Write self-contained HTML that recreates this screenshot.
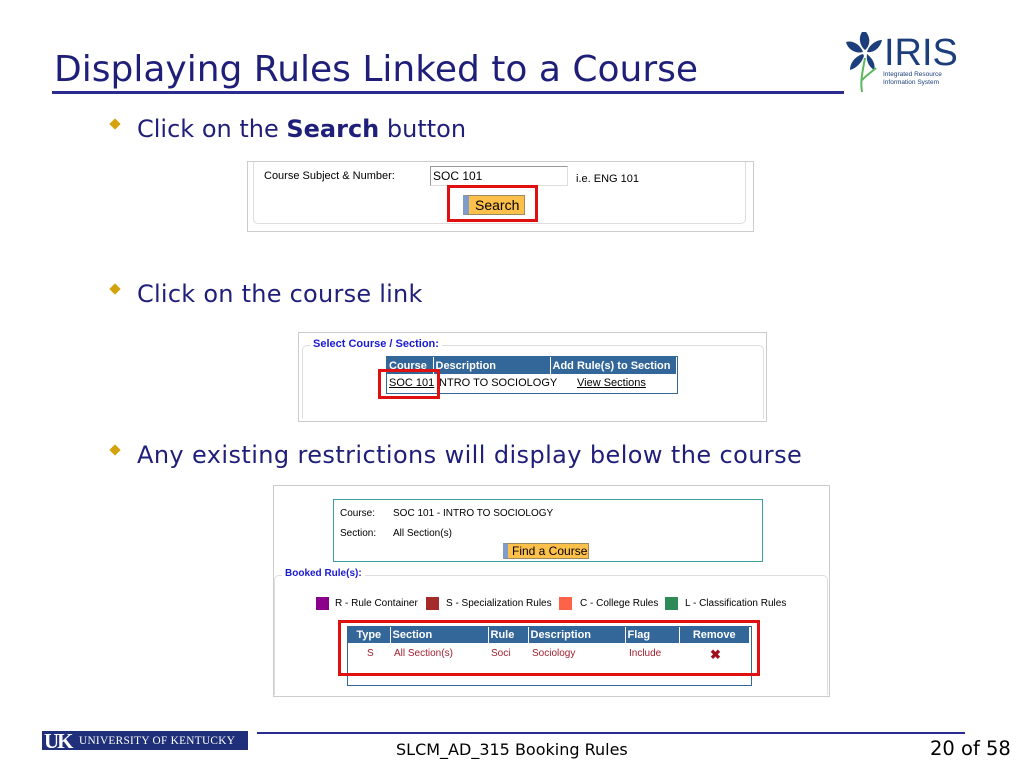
<!DOCTYPE html>
<html><head><meta charset="utf-8"><style>
*{margin:0;padding:0;box-sizing:border-box}
body{width:1024px;height:768px;background:#fff;position:relative;overflow:hidden;font-family:"DejaVu Sans","Liberation Sans",sans-serif;color:#1f1f7a}
.a{position:absolute}
.t{font-size:36px;left:54px;top:49px;white-space:nowrap}
.bul{font-size:24px;white-space:nowrap;left:137px;letter-spacing:0.25px}
.dia{position:absolute;width:8px;height:8px;background:#d4a20c;transform:rotate(45deg);left:111px}
.s{font-family:"Liberation Sans",sans-serif;color:#000;font-size:11px;white-space:nowrap}
.red{border:3px solid #e01010}
th{background:#336699;color:#fff;font-weight:bold;text-align:left;padding:0 2px;font-size:11px;border-right:1px solid #fff}
</style></head><body>
<div class="a t">Displaying Rules Linked to a Course</div>
<div class="a" style="left:52px;top:91px;width:792px;height:3px;background:#2a2a90"></div>
<!-- IRIS logo -->
<svg class="a" style="left:838px;top:28px" width="120" height="70" viewBox="0 0 120 70">
<g fill="#1c3f7c">
<path d="M24 4 C20 10 22 18 27 22 C32 18 33 10 28 4 Z"/>
<path d="M8 14 C14 12 22 16 25 24 C18 26 10 22 8 14 Z"/>
<path d="M44 12 C38 12 31 17 29 24 C36 25 42 20 44 12 Z"/>
<path d="M25 26 C18 28 12 34 12 42 C19 40 24 34 26 28 Z"/>
<path d="M29 26 C34 30 38 36 36 42 C30 38 28 32 29 26 Z"/>
</g>
<path d="M27 30 C25 42 22 52 24 64" stroke="#5cb85c" stroke-width="2" fill="none"/>
<path d="M24 52 C30 46 36 42 38 40" stroke="#5cb85c" stroke-width="2" fill="none"/>
<text x="46" y="37" font-family="Liberation Sans" font-size="38" fill="#1c3f7c">IRIS</text>
<text x="45" y="48" font-family="Liberation Sans" font-size="6.5" fill="#1c3f7c">Integrated Resource</text>
<text x="45" y="56" font-family="Liberation Sans" font-size="6.5" fill="#1c3f7c">Information System</text>
</svg>

<div class="dia" style="top:120px"></div>
<div class="a bul" style="top:115px;letter-spacing:0">Click on the <b>Search</b> button</div>

<!-- box1 -->
<div class="a" style="left:247px;top:161px;width:507px;height:71px;border:1px solid #ccc"></div>
<div class="a" style="left:253px;top:162px;width:493px;height:62px;border:1px solid #ddd;border-top:none;border-radius:0 0 5px 5px"></div>
<div class="a s" style="left:264px;top:170px">Course Subject &amp; Number:</div>
<div class="a" style="left:430px;top:166px;width:138px;height:20px;border:1px solid #999;border-right-color:#ddd;border-bottom-color:#ddd"></div>
<div class="a s" style="left:433px;top:169px;font-size:12px">SOC 101</div>
<div class="a s" style="left:576px;top:173px">i.e. ENG 101</div>
<div class="a red" style="left:447px;top:185px;width:91px;height:37px"></div>
<div class="a" style="left:463px;top:195px;width:62px;height:20px;background:#fdc04a;border:1px solid #9a8a60;border-left:6px solid #7e9ccc"></div>
<div class="a s" style="left:475px;top:197px;font-size:14px">Search</div>

<div class="dia" style="top:285px"></div>
<div class="a bul" style="top:280px">Click on the course link</div>

<!-- box2 -->
<div class="a" style="left:298px;top:332px;width:469px;height:90px;border:1px solid #ccc"></div>
<div class="a" style="left:302px;top:345px;width:462px;height:74px;border:1px solid #ddd;border-bottom:none;border-radius:5px 5px 0 0"></div>
<div class="a s" style="left:310px;top:338px;background:#fff;color:#1a1ad0;font-weight:bold;padding:0 3px">Select Course / Section:</div>
<div class="a" style="left:386px;top:356px;width:292px;height:38px;border:1px solid #336699"></div>
<table class="a" style="left:387px;top:357px;border-collapse:collapse;font-family:'Liberation Sans',sans-serif">
<tr style="height:17px"><th style="width:46px">Course</th><th style="width:117px">Description</th><th style="width:126px;border-right:none">Add Rule(s) to Section</th></tr>
</table>
<div class="a s" style="left:389px;top:377px;text-decoration:underline">SOC 101</div>
<div class="a s" style="left:436px;top:377px">INTRO TO SOCIOLOGY</div>
<div class="a s" style="left:577px;top:377px;text-decoration:underline">View Sections</div>
<div class="a red" style="left:378px;top:369px;width:62px;height:30px"></div>

<div class="dia" style="top:446px"></div>
<div class="a bul" style="top:441px;letter-spacing:0.4px">Any existing restrictions will display below the course</div>

<!-- box3 -->
<div class="a" style="left:273px;top:485px;width:557px;height:212px;border:1px solid #ccc"></div>
<div class="a" style="left:333px;top:499px;width:430px;height:63px;border:1px solid #3aa0a0"></div>
<div class="a s" style="left:340px;top:508px;font-size:10px">Course:</div>
<div class="a s" style="left:393px;top:508px;font-size:10px">SOC 101 - INTRO TO SOCIOLOGY</div>
<div class="a s" style="left:340px;top:528px;font-size:10px">Section:</div>
<div class="a s" style="left:393px;top:528px;font-size:10px">All Section(s)</div>
<div class="a" style="left:503px;top:543px;width:86px;height:16px;background:#fdc04a;border:1px solid #9a8a60;border-left:5px solid #7e9ccc"></div>
<div class="a s" style="left:512px;top:544px;font-size:12px">Find a Course</div>
<div class="a" style="left:274px;top:575px;width:554px;height:120px;border:1px solid #ddd;border-bottom:none;border-radius:5px 5px 0 0"></div>
<div class="a s" style="left:282px;top:568px;background:#fff;color:#1a1ad0;font-weight:bold;font-size:10px;padding:0 3px">Booked Rule(s):</div>
<div class="a" style="left:316px;top:597px;width:13px;height:13px;background:#8b008b"></div>
<div class="a s" style="left:335px;top:598px;font-size:10px">R - Rule Container</div>
<div class="a" style="left:426px;top:597px;width:13px;height:13px;background:#a52a2a"></div>
<div class="a s" style="left:446px;top:598px;font-size:10px">S - Specialization Rules</div>
<div class="a" style="left:559px;top:597px;width:13px;height:13px;background:#ff6347"></div>
<div class="a s" style="left:580px;top:598px;font-size:10px">C - College Rules</div>
<div class="a" style="left:665px;top:597px;width:13px;height:13px;background:#2e8b57"></div>
<div class="a s" style="left:685px;top:598px;font-size:10px">L - Classification Rules</div>
<div class="a" style="left:347px;top:626px;width:405px;height:60px;border:1px solid #336699"></div>
<table class="a" style="left:348px;top:627px;border-collapse:collapse;font-family:'Liberation Sans',sans-serif">
<tr style="height:16px"><th style="width:42px;text-align:center">Type</th><th style="width:98px">Section</th><th style="width:40px">Rule</th><th style="width:97px">Description</th><th style="width:54px">Flag</th><th style="width:70px;text-align:center;border-right:none">Remove</th></tr>
</table>
<div class="a s" style="left:367px;top:648px;color:#a02030;font-size:10px">S</div>
<div class="a s" style="left:394px;top:648px;color:#a02030;font-size:10px">All Section(s)</div>
<div class="a s" style="left:491px;top:648px;color:#a02030;font-size:10px">Soci</div>
<div class="a s" style="left:532px;top:648px;color:#a02030;font-size:10px">Sociology</div>
<div class="a s" style="left:629px;top:648px;color:#a02030;font-size:10px">Include</div>
<div class="a s" style="left:710px;top:647px;color:#a0101c;font-size:13px;font-weight:bold">✖</div>
<div class="a red" style="left:338px;top:620px;width:422px;height:56px"></div>

<!-- footer -->
<div class="a" style="left:42px;top:731px;width:206px;height:19px;background:#1f2f7a;overflow:hidden"></div>
<div class="a" style="left:44px;top:729px;font-family:'Liberation Serif',serif;font-weight:bold;color:#fff;font-size:21px;letter-spacing:-2px">UK</div>
<div class="a" style="left:79px;top:735px;font-family:'Liberation Serif',serif;color:#fff;font-size:11.3px;letter-spacing:0.3px;white-space:nowrap">UNIVERSITY OF KENTUCKY</div>
<div class="a" style="left:257px;top:732px;width:708px;height:2px;background:#2a2a90"></div>
<div class="a" style="left:396px;top:740px;font-size:16px;color:#000;white-space:nowrap">SLCM_AD_315 Booking Rules</div>
<div class="a" style="left:930px;top:737px;font-size:19.5px;color:#000;white-space:nowrap">20 of 58</div>
</body></html>
